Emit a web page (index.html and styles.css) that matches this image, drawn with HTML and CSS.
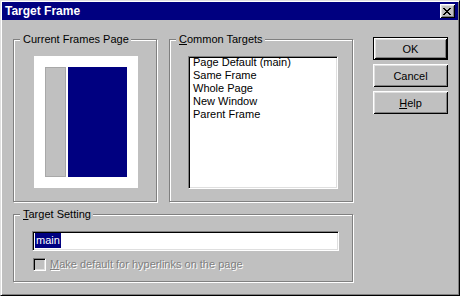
FILE: index.html
```html
<!DOCTYPE html>
<html>
<head>
<meta charset="utf-8">
<title>Target Frame</title>
<link rel="stylesheet" href="styles.css">
</head>
<body>
<div class="window">
  <div class="titlebar">
    <span class="title">Target Frame</span>
    <span class="close">
      <svg width="8" height="7" viewBox="0 0 8 7" shape-rendering="crispEdges">
        <path fill="#000" d="M0 0h2v1h-2zM6 0h2v1h-2zM1 1h2v1h-2zM5 1h2v1h-2zM2 2h4v1h-4zM3 3h2v1h-2zM2 4h4v1h-4zM1 5h2v1h-2zM5 5h2v1h-2zM0 6h2v1h-2zM6 6h2v1h-2z"/>
      </svg>
    </span>
  </div>
  <div class="body">
    <div class="main">
      <div class="top-row">
        <div class="group g-preview">
          <span class="legend">Current Frames Page</span>
          <div class="preview">
            <div class="pv-side"></div>
            <div class="pv-main"></div>
          </div>
        </div>
        <div class="group g-targets">
          <span class="legend"><u>C</u>ommon Targets</span>
          <div class="listbox">
            <ul class="items">
              <li>Page Default (main)</li>
              <li>Same Frame</li>
              <li>Whole Page</li>
              <li>New Window</li>
              <li>Parent Frame</li>
            </ul>
          </div>
        </div>
      </div>
      <div class="group g-setting">
        <span class="legend"><u>T</u>arget Setting</span>
        <div class="edit"><span class="sel">main</span></div>
        <div class="check">
          <span class="box"></span>
          <span class="disabled-text"><u>M</u>ake default for hyperlinks on the page</span>
        </div>
      </div>
    </div>
    <div class="buttons">
      <div class="btn btn-default">OK</div>
      <div class="btn">Cancel</div>
      <div class="btn"><u>H</u>elp</div>
    </div>
  </div>
</div>
</body>
</html>
```

FILE: styles.css
```css
* { box-sizing: border-box; }
html, body { margin: 0; padding: 0; }
body {
  font-family: "Liberation Sans", Arial, sans-serif;
  font-size: 11px;
  color: #000;
  background: #c0c0c0;
}
u { text-decoration: underline; text-underline-offset: 1px; }

.window {
  width: 460px;
  height: 296px;
  background: #c0c0c0;
  border: 1px solid;
  border-color: #dfdfdf #000 #000 #dfdfdf;
  box-shadow: inset 1px 1px 0 #fff, inset -1px -1px 0 #808080;
  padding: 1px;
}

.titlebar {
  height: 18px;
  background: #000080;
  display: flex;
  align-items: center;
  justify-content: space-between;
  padding: 0 3px 0 3px;
}
.title {
  color: #fff;
  font-weight: bold;
  font-size: 12px;
  line-height: 14px;
}
.close {
  width: 15px;
  height: 14px;
  background: #c0c0c0;
  box-shadow: inset 1px 1px 0 #fff, inset -1px -1px 0 #000, inset 2px 2px 0 #dfdfdf, inset -2px -2px 0 #808080;
  display: flex;
  align-items: center;
  justify-content: center;
  padding: 0 1px 0 0;
}
.close svg { display: block; }

.body {
  display: flex;
  padding: 17px 0 0 11px;
}
.main { margin-top: 2px; }
.top-row { display: flex; gap: 12px; }

.group {
  position: relative;
  border: 1px solid #808080;
  box-shadow: inset 1px 1px 0 #fff, 1px 1px 0 #fff;
}
.legend {
  position: absolute;
  top: -7px;
  left: 6px;
  padding: 0 2px 0 3px;
  background: #c0c0c0;
  line-height: 13px;
  white-space: nowrap;
}

.g-preview {
  width: 144px;
  height: 163px;
  padding: 16px 0 0 20px;
}
.preview {
  width: 104px;
  height: 132px;
  background: #fff;
  padding: 11px;
  display: flex;
  gap: 2px;
}
.pv-side {
  width: 21px;
  height: 110px;
  background: #c0c0c0;
  border: 1px solid #a8a8a8;
}
.pv-main {
  width: 59px;
  height: 110px;
  background: #000080;
}

.g-targets {
  width: 184px;
  height: 163px;
  padding: 16px 0 0 18px;
}
.listbox {
  width: 150px;
  height: 133px;
  background: #fff;
  border: 1px solid;
  border-color: #808080 #fff #fff #808080;
  box-shadow: inset 1px 1px 0 #000, inset -1px -1px 0 #dfdfdf;
  padding: 0 0 0 4px;
}
.items {
  list-style: none;
  margin: -1px 0 0 0;
  padding: 0;
}
.items li {
  line-height: 13px;
  white-space: nowrap;
}

.g-setting {
  width: 340px;
  height: 68px;
  margin-top: 12px;
  padding: 16px 0 0 18px;
}
.edit {
  width: 307px;
  height: 20px;
  background: #fff;
  border: 1px solid;
  border-color: #808080 #fff #fff #808080;
  box-shadow: inset 1px 1px 0 #000, inset -1px -1px 0 #dfdfdf;
  padding: 1px 0 0 2px;
}
.sel {
  display: inline-block;
  background: #000080;
  color: #fff;
  line-height: 15px;
  height: 15px;
  padding: 0 1px;
}
.check {
  display: flex;
  align-items: center;
  gap: 4px;
  margin: 7px 0 0 1px;
}
.box {
  width: 13px;
  height: 13px;
  background: #c0c0c0;
  border: 1px solid;
  border-color: #808080 #fff #fff #808080;
  box-shadow: inset 1px 1px 0 #000, inset -1px -1px 0 #dfdfdf;
}
.disabled-text {
  color: #808080;
  text-shadow: 1px 1px 0 #fff;
  line-height: 13px;
  white-space: nowrap;
}

.buttons {
  margin-left: 20px;
  display: flex;
  flex-direction: column;
  gap: 4px;
}
.btn {
  width: 75px;
  height: 23px;
  background: #c0c0c0;
  display: flex;
  align-items: center;
  justify-content: center;
  box-shadow: inset 1px 1px 0 #fff, inset -1px -1px 0 #000, inset 2px 2px 0 #dfdfdf, inset -2px -2px 0 #808080;
}
.btn-default {
  border: 1px solid #000;
}
```
